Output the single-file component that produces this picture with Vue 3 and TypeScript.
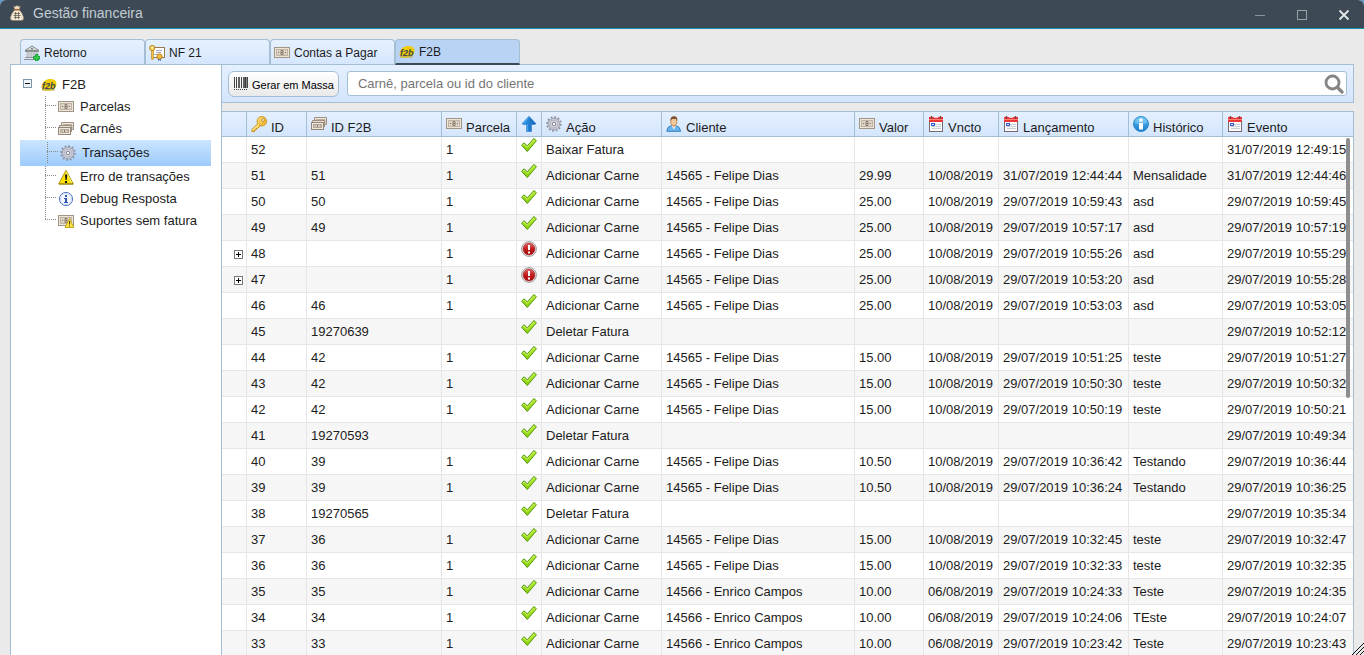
<script setup lang="ts">
import { ref } from 'vue'

interface Tab { label: string; icon: string }
interface TreeItem { label: string; icon: string }
interface Column { label: string; icon: string; cls: string }
interface Row {
  id: string; f2b: string; parcela: string; ok: boolean; acao: string; cliente: string
  valor: string; vncto: string; lancamento: string; historico: string; evento: string
}

const tabs: Tab[] = [
  { label: 'Retorno', icon: 'bank' },
  { label: 'NF 21', icon: 'certificate' },
  { label: 'Contas a Pagar', icon: 'note' },
  { label: 'F2B', icon: 'f2b' },
]
const activeTab = ref(3)

const tree: TreeItem[] = [
  { label: 'Parcelas', icon: 'note' },
  { label: 'Carnês', icon: 'notes' },
  { label: 'Transações', icon: 'gear' },
  { label: 'Erro de transações', icon: 'warning' },
  { label: 'Debug Resposta', icon: 'info' },
  { label: 'Suportes sem fatura', icon: 'note-warning' },
]
const selected = ref(2)
const open = ref(true)
const query = ref('')

const columns: Column[] = [
  { label: '', icon: '', cls: 'c-sub' },
  { label: 'ID', icon: 'key', cls: 'c-id' },
  { label: 'ID F2B', icon: 'notes', cls: 'c-f2b' },
  { label: 'Parcela', icon: 'note', cls: 'c-parcela' },
  { label: '', icon: 'arrow', cls: 'c-status' },
  { label: 'Ação', icon: 'gear', cls: 'c-acao' },
  { label: 'Cliente', icon: 'user', cls: 'c-cliente' },
  { label: 'Valor', icon: 'note', cls: 'c-valor' },
  { label: 'Vncto', icon: 'calendar', cls: 'c-vncto' },
  { label: 'Lançamento', icon: 'calendar', cls: 'c-lanc' },
  { label: 'Histórico', icon: 'info-blue', cls: 'c-hist' },
  { label: 'Evento', icon: 'calendar', cls: 'c-evento' },
]

const felipe = '14565 - Felipe Dias'
const enrico = '14566 - Enrico Campos'

function carne(id: string, f2b: string, cliente: string, valor: string, vncto: string, lanc: string, historico: string, evento: string, day = '29/07/2019', ok = true): Row {
  return { id, f2b, parcela: '1', ok, acao: 'Adicionar Carne', cliente, valor, vncto, lancamento: `${day} ${lanc}`, historico, evento: `${day} ${evento}` }
}
function fatura(id: string, f2b: string, parcela: string, acao: string, evento: string): Row {
  return { id, f2b, parcela, ok: true, acao, cliente: '', valor: '', vncto: '', lancamento: '', historico: '', evento }
}

const d10 = '10/08/2019'
const d06 = '06/08/2019'
const rows: Row[] = [
  fatura('52', '', '1', 'Baixar Fatura', '31/07/2019 12:49:15'),
  carne('51', '51', felipe, '29.99', d10, '12:44:44', 'Mensalidade', '12:44:46', '31/07/2019'),
  carne('50', '50', felipe, '25.00', d10, '10:59:43', 'asd', '10:59:45'),
  carne('49', '49', felipe, '25.00', d10, '10:57:17', 'asd', '10:57:19'),
  carne('48', '', felipe, '25.00', d10, '10:55:26', 'asd', '10:55:29', '29/07/2019', false),
  carne('47', '', felipe, '25.00', d10, '10:53:20', 'asd', '10:55:28', '29/07/2019', false),
  carne('46', '46', felipe, '25.00', d10, '10:53:03', 'asd', '10:53:05'),
  fatura('45', '19270639', '', 'Deletar Fatura', '29/07/2019 10:52:12'),
  carne('44', '42', felipe, '15.00', d10, '10:51:25', 'teste', '10:51:27'),
  carne('43', '42', felipe, '15.00', d10, '10:50:30', 'teste', '10:50:32'),
  carne('42', '42', felipe, '15.00', d10, '10:50:19', 'teste', '10:50:21'),
  fatura('41', '19270593', '', 'Deletar Fatura', '29/07/2019 10:49:34'),
  carne('40', '39', felipe, '10.50', d10, '10:36:42', 'Testando', '10:36:44'),
  carne('39', '39', felipe, '10.50', d10, '10:36:24', 'Testando', '10:36:25'),
  fatura('38', '19270565', '', 'Deletar Fatura', '29/07/2019 10:35:34'),
  carne('37', '36', felipe, '15.00', d10, '10:32:45', 'teste', '10:32:47'),
  carne('36', '36', felipe, '15.00', d10, '10:32:33', 'teste', '10:32:35'),
  carne('35', '35', enrico, '10.00', d06, '10:24:33', 'Teste', '10:24:35'),
  carne('34', '34', enrico, '10.00', d06, '10:24:06', 'TEste', '10:24:07'),
  carne('33', '33', enrico, '10.00', d06, '10:23:42', 'Teste', '10:23:43'),
]
</script>

<template>
  <div class="window">
    <svg class="sprite" width="0" height="0" aria-hidden="true">
      <defs>
        <linearGradient id="g-check" x1="0" y1="0" x2="0" y2="1"><stop offset="0" stop-color="#c0ee30" /><stop offset="1" stop-color="#86cc08" /></linearGradient>
        <linearGradient id="g-blue" x1="0" y1="0" x2="0" y2="1"><stop offset="0" stop-color="#6cc4f4" /><stop offset="1" stop-color="#1478c8" /></linearGradient>
        <linearGradient id="g-arrow" x1="0" y1="0" x2="1" y2="0"><stop offset="0" stop-color="#2f9cec" /><stop offset="1" stop-color="#1262b8" /></linearGradient>
        <linearGradient id="g-red" x1="0" y1="0" x2="0" y2="1"><stop offset="0" stop-color="#e06a68" /><stop offset=".5" stop-color="#c01c1c" /><stop offset="1" stop-color="#a80c0c" /></linearGradient>
        <linearGradient id="g-gold" x1="0" y1="0" x2="1" y2="1"><stop offset="0" stop-color="#ffe88a" /><stop offset="1" stop-color="#eda412" /></linearGradient>
      </defs>
      <symbol id="note" viewBox="0 0 16 16">
        <rect x=".5" y="2.500" width="15" height="10" fill="#ece5da" stroke="#a19587" />
        <rect x="2.500" y="4.500" width="11" height="6" fill="#ddd4c7" stroke="#bfb3a4" />
        <ellipse cx="8" cy="7.500" rx="2.300" ry="2.500" fill="#b3a798" />
        <path d="M7 5.500h2M7 9.500h2M4 7.500h1M11 7.500h1" stroke="#85786b" />
        <path d="M7.500 7.500h1" stroke="#5f544a" />
      </symbol>
      <symbol id="notes" viewBox="0 0 16 16">
        <path d="M3.500 8.500V1.500h12v7h-2" fill="#eee7dc" stroke="#a08f80" />
        <path d="M5 3.500h9v4" fill="none" stroke="#bcae9f" />
        <path d="M1.500 10V4.500h12V11" fill="#e6ded2" stroke="#a08f80" />
        <rect x=".5" y="6.500" width="12" height="7" fill="#ede6db" stroke="#93867a" />
        <rect x="2.500" y="8.500" width="8" height="3" fill="#d9d0c3" stroke="#b5a797" />
        <path d="M6.500 9v2" stroke="#7d7064" /><path d="M3.500 10h1M9 10h1" stroke="#978a7d" />
      </symbol>
      <symbol id="gear" viewBox="0 0 16 16">
        <circle cx="8" cy="8" r="6.900" fill="none" stroke="#8f919f" stroke-width="1.800" stroke-dasharray="1.800 1.813" />
        <circle cx="8" cy="8" r="5.800" fill="#c5c7d2" stroke="#a3a5b2" />
        <circle cx="8" cy="8" r="3.800" fill="#dcdde4" stroke="#b4b6c2" />
        <circle cx="8" cy="8" r="1.800" fill="#fff" stroke="#787b8c" />
      </symbol>
      <symbol id="warning" viewBox="0 0 16 16">
        <path d="M8 1.300 15.300 15H.7z" fill="#ffe100" stroke="#b29a12" stroke-linejoin="round" />
        <path d="M8 3 13.800 14" stroke="#fff27a" />
        <path d="M15.300 15H1" stroke="#8b7810" />
        <path d="M7 5.500h2.200L8.700 11H7.500z" fill="#111" /><rect x="7" y="12" width="2" height="2" fill="#111" />
      </symbol>
      <symbol id="info" viewBox="0 0 16 16">
        <circle cx="8" cy="8" r="6.600" fill="#f6f9ff" stroke="#5478c4" />
        <circle cx="8" cy="8" r="5.600" fill="none" stroke="#c8d7f5" />
        <rect x="7" y="4" width="2" height="2" fill="#2c54b4" />
        <path d="M6 7h3v5H7V8H6z" fill="#2c54b4" /><path d="M6 11.500h4" stroke="#2c54b4" />
      </symbol>
      <symbol id="info-blue" viewBox="0 0 16 16">
        <circle cx="8" cy="8" r="7.500" fill="url(#g-blue)" stroke="#2c88ca" />
        <path d="M2 7a6 6 0 0 1 12 0Q8 9 2 7z" fill="#8fd5fa" opacity=".5" />
        <circle cx="8" cy="4.300" r="1.800" fill="#fff" />
        <path d="M6 7h4v6.500H6z" fill="#fff" />
      </symbol>
      <symbol id="note-warning" viewBox="0 0 16 16">
        <use href="#note" />
        <path d="M11.500 5.500 15.800 14.500H7z" fill="#ffe340" stroke="#c6a91b" stroke-linejoin="round" />
        <path d="M11.500 8v3.500M11.500 12.500v1" stroke="#4a4010" />
      </symbol>
      <symbol id="f2b" viewBox="0 0 16 16">
        <path d="M.5 9.500Q1.500 3 8 2q7.500-.5 7.500 5-.5 6-8 7-7.500 0-7-4.500z" fill="#f2cc08" />
        <path d="M1 12.500h12.500" stroke="#c3b44c" stroke-width="2" />
      </symbol>
      <symbol id="key" viewBox="0 0 16 16">
        <path d="M7.500 7 1 13.500V15.500H3.500V14H5V12.500H6.500L9.500 9.500" fill="#ffd35a" stroke="#c98d18" stroke-linejoin="round" />
        <circle cx="10.800" cy="5.200" r="4.700" fill="url(#g-gold)" stroke="#cf951c" />
        <circle cx="12" cy="4" r="1.400" fill="#fff" stroke="#b87c12" stroke-width=".8" />
        <path d="M2 14 8 8" stroke="#fff0a8" />
      </symbol>
      <symbol id="arrow" viewBox="0 0 16 16">
        <path d="M8 .3 15 7.800 13.500 8.500H10.500V15.500H5.500V8.500H2.500L1 7.800z" fill="url(#g-arrow)" stroke="#1a6cbc" stroke-width=".5" stroke-linejoin="round" />
        <path d="M7.800 1.500 3 7.200M6.300 8v7" stroke="#58b4f6" fill="none" stroke-width=".8" />
      </symbol>
      <symbol id="user" viewBox="0 0 16 16">
        <path d="M.8 15.300Q1 10.500 5 9.700h5q4 .8 4.700 5.600z" fill="#68b4ee" stroke="#3880bc" />
        <path d="M5.500 9.500h4.500L7.800 13.500z" fill="#fff" />
        <path d="M5.800 9 7.800 12 9.800 9" fill="#eab482" />
        <ellipse cx="7.800" cy="5.500" rx="3" ry="4.200" fill="#f2c79c" stroke="#b67c4a" stroke-width=".8" />
        <path d="M4.500 5Q4 .5 8 .3q4 0 3.200 4.700L10 3H6z" fill="#80512e" />
      </symbol>
      <symbol id="calendar" viewBox="0 0 16 16">
        <rect x="1.500" y="3.500" width="13" height="12" fill="#fdfdfd" stroke="#766a72" />
        <path d="M1 1h14v5H1z" fill="#ea3636" /><path d="M1 3.500h14" stroke="#ff8078" />
        <path d="M3.500 0v3M12.500 0v3" stroke="#8b4038" stroke-width="1.500" /><path d="M6 1.500h4" stroke="#f6c8c4" />
        <path d="M4 8.500h9M4 10.500h9M4 12.500h9" stroke="#c0c6cc" />
        <path d="M6.500 7v7M9.500 7v7" stroke="#e4e7ea" />
        <rect x="3" y="7" width="4" height="3" fill="#3357cc" /><path d="M4 8.500h2" stroke="#dce6ff" />
      </symbol>
      <symbol id="check" viewBox="0 0 16 16">
        <path d="M.6 8.200 3 5.800l3.300 3L13 1.400 15.400 3.800 6.300 14.500z" fill="url(#g-check)" stroke="#4b9a12" stroke-linejoin="round" />
        <path d="M2 8 3 7 6.300 10.200 13 3" fill="none" stroke="#def884" stroke-width=".7" />
      </symbol>
      <symbol id="error" viewBox="0 0 16 16">
        <circle cx="8" cy="8" r="7.400" fill="#ececec" stroke="#9b9b9b" />
        <circle cx="8" cy="8" r="5.900" fill="url(#g-red)" stroke="#a61414" stroke-width=".6" />
        <path d="M7 4h2v5H7zM7 10.500h2v2H7z" fill="#fff" />
      </symbol>
      <symbol id="bank" viewBox="0 0 16 16">
        <path d="M8 .8 15 5.500H1z" fill="#d4d8d8" stroke="#898e8f" stroke-linejoin="round" />
        <path d="M1 6.500h14M1 12.500h14M0 14.500h15" stroke="#8e9293" />
        <path d="M3.500 7v5M6.500 7v5M9.500 7v5M12.500 7v5" stroke="#a0a5a6" stroke-width="2" />
        <path d="M3 7v5M6 7v5M9 7v5M12 7v5" stroke="#e2e4e4" />
        <circle cx="8" cy="3.800" r="1" fill="#7b8182" />
        <path d="M11.500 9.500h2.500V11.500h2V14h-2v2h-2.500v-2h-2V11.500h2z" fill="#2fcc4c" stroke="#129430" stroke-width=".8" />
      </symbol>
      <symbol id="certificate" viewBox="0 0 16 16">
        <rect x="3.500" y="2.500" width="12" height="10" fill="#fff" stroke="#9b7a50" />
        <path d="M7 5.500h6M7 7.500h5M5 9.500h4" stroke="#a8a6c4" />
        <path d="M2.500 5h2v9l-1 1-1-1z" fill="#f6c644" stroke="#b47c12" stroke-width=".6" />
        <circle cx="3.200" cy="3" r="2.600" fill="#ffd965" stroke="#bb8212" /><circle cx="3.200" cy="2.600" r=".8" fill="#fff" />
        <path d="M9 12v4l1.500-1 1.500 1v-4z" fill="#3c70d8" />
        <circle cx="10.500" cy="11.500" r="2.600" fill="#f6bd36" stroke="#bd821c" />
      </symbol>
      <symbol id="moneybag" viewBox="0 0 16 16">
        <path d="M5.500 5Q2.500 8 1.500 12 .8 15.500 4 15.500h8q3.200 0 2.500-3.500Q13.500 8 10.500 5z" fill="#efe5d2" stroke="#8c7759" stroke-width=".6" />
        <path d="M5.800 4.300 4.800 1.200 6.500 1.500 8 .5 9.500 1.500 11.200 1.200 10.200 4.300z" fill="#eadfc9" stroke="#a38c6a" stroke-width=".5" />
        <path d="M5.500 4.600h5" stroke="#b2602c" stroke-width="1.300" />
        <path d="M6.500 7v7M9.500 7v7M5 8.500h6M4.500 10.500h7M5 12.500h6" stroke="#6b6152" stroke-width=".8" />
      </symbol>
      <symbol id="barcode" viewBox="0 0 16 16">
        <path d="M1.500 1v11M3.500 1v11M8.500 1v11M14.500 1v11" stroke="#444" />
        <path d="M6 1v11M11 1v11M12.800 1v11" stroke="#222" stroke-width="1.400" />
        <path d="M1 13.500h14" stroke="#444" stroke-dasharray="1 1" />
      </symbol>
      <symbol id="search" viewBox="0 0 20 20">
        <circle cx="8.500" cy="8.500" r="6.500" fill="none" stroke="#858585" stroke-width="2.800" />
        <path d="M13.500 13.500 18 18" stroke="#858585" stroke-width="3.200" stroke-linecap="round" />
      </symbol>
    </svg>

    <header class="titlebar">
      <svg class="icon" aria-hidden="true"><use href="#moneybag" /></svg>
      <h1>Gestão financeira</h1>
      <div class="controls">
        <button type="button" aria-label="Minimizar"><svg width="12" height="12"><path d="M1 6.500h10" stroke="#8b949b" /></svg></button>
        <button type="button" aria-label="Maximizar"><svg width="12" height="12"><rect x="1.500" y="1.500" width="9" height="9" fill="none" stroke="#9aa2a8" /></svg></button>
        <button type="button" aria-label="Fechar"><svg width="12" height="12"><path d="M1.500 1.500l9 9M10.500 1.500l-9 9" stroke="#e4e8ea" stroke-width="1.800" /></svg></button>
      </div>
    </header>

    <nav class="tabs" role="tablist">
      <button v-for="(tab, i) in tabs" :key="tab.label" type="button" role="tab" class="tab" :class="{ active: activeTab === i }" :aria-selected="activeTab === i" @click="activeTab = i">
        <svg class="icon" aria-hidden="true"><use :href="`#${tab.icon}`" /><text v-if="tab.icon === 'f2b'" class="logo" x="1" y="12">f2b</text></svg>
        <span>{{ tab.label }}</span>
      </button>
    </nav>

    <div class="body">
      <aside class="sidebar">
        <div class="root">
          <button type="button" class="toggle" aria-label="Recolher F2B" :aria-expanded="open" @click="open = !open">
            <svg width="9" height="9"><rect x=".5" y=".5" width="8" height="8" fill="#eef3f8" stroke="#7f95aa" /><path d="M2 4.500h5" stroke="#111" /></svg>
          </button>
          <svg class="icon" aria-hidden="true"><use href="#f2b" /><text class="logo" x="1" y="12">f2b</text></svg>
          <span class="label">F2B</span>
        </div>
        <ul v-if="open">
          <li v-for="(item, i) in tree" :key="item.label">
            <a href="#" class="node" :class="{ selected: selected === i }" @click.prevent="selected = i">
              <span class="branch" :class="{ end: i === tree.length - 1 }"></span>
              <svg class="icon" aria-hidden="true"><use :href="`#${item.icon}`" /></svg>
              <span class="label">{{ item.label }}</span>
            </a>
          </li>
        </ul>
      </aside>

      <main class="content">
        <form class="toolbar" @submit.prevent>
          <button type="button" class="bulk">
            <svg class="icon" aria-hidden="true"><use href="#barcode" /></svg>
            <span>Gerar em Massa</span>
          </button>
          <div class="search">
            <input v-model="query" type="text" aria-label="Carnê, parcela ou id do cliente" placeholder="Carnê, parcela ou id do cliente">
            <button type="submit" aria-label="Pesquisar"><svg width="20" height="20"><use href="#search" /></svg></button>
          </div>
        </form>

        <div class="grid">
          <table>
            <colgroup><col v-for="c in columns" :key="c.cls" :class="c.cls"></colgroup>
            <thead>
              <tr>
                <th v-for="c in columns" :key="c.cls" scope="col">
                  <div class="head">
                    <svg v-if="c.icon" class="icon" aria-hidden="true"><use :href="`#${c.icon}`" /></svg>
                    <span>{{ c.label }}</span>
                  </div>
                </th>
              </tr>
            </thead>
            <tbody>
              <tr v-for="r in rows" :key="r.id">
                <td class="sub">
                  <button v-if="!r.ok" type="button" class="toggle" :aria-label="`Expandir ${r.id}`">
                    <svg width="9" height="9"><rect x=".5" y=".5" width="8" height="8" fill="#fff" stroke="#777" /><path d="M2 4.500h5M4.500 2v5" stroke="#000" /></svg>
                  </button>
                </td>
                <td>{{ r.id }}</td>
                <td>{{ r.f2b }}</td>
                <td>{{ r.parcela }}</td>
                <td class="status"><svg class="icon" role="img" :aria-label="r.ok ? 'OK' : 'Erro'"><use :href="r.ok ? '#check' : '#error'" /></svg></td>
                <td>{{ r.acao }}</td>
                <td>{{ r.cliente }}</td>
                <td>{{ r.valor }}</td>
                <td>{{ r.vncto }}</td>
                <td>{{ r.lancamento }}</td>
                <td>{{ r.historico }}</td>
                <td>{{ r.evento }}</td>
              </tr>
            </tbody>
          </table>
          <div class="thumb"></div>
        </div>
      </main>
    </div>
    <svg class="resizer" width="12" height="12" aria-hidden="true"><path d="M0 12 12 0M4 12l8-8M8 12l4-4" stroke="#111" /></svg>
  </div>
</template>

<style>
html, body { margin: 0; background: #5b9bd0; overflow: hidden; }
</style>

<style scoped>
* { box-sizing: border-box; }
.window {
  position: relative;
  display: flex;
  flex-direction: column;
  height: 100vh;
  overflow: hidden;
  background: #eaeaea;
  border-radius: 6px 6px 0 0;
  font: 13px/15px "Liberation Sans", Arial, sans-serif;
  color: #1c1c1c;
}
.sprite { position: absolute; }
.icon { display: block; flex: none; width: 16px; height: 16px; }
.logo { font-size: 9px; font-style: italic; font-weight: bold; fill: #3d4a4c; }
button { margin: 0; padding: 0; border: 0; background: none; font: inherit; color: inherit; cursor: pointer; }
button svg { display: block; }

.titlebar {
  display: flex;
  align-items: center;
  gap: 8px;
  flex: none;
  height: 29px;
  padding: 0 14px 3px 9px;
  background: #3d4a56;
  border-bottom: 1px solid #1593ac;
}
h1 { margin: 0; font-size: 14px; line-height: 16px; font-weight: normal; color: #c3ccd3; }
.controls { display: flex; gap: 30px; margin-left: auto; padding-top: 4px; }

.tabs { display: flex; flex: none; margin: 10px 10px 0; padding: 0 10px; }
.tab {
  display: flex;
  align-items: center;
  gap: 4px;
  width: 125px;
  height: 25px;
  padding: 2px 3px 0;
  border: 1px solid #a4bed4;
  border-bottom: 0;
  border-radius: 4px 4px 0 0;
  background: linear-gradient(#e6f1ff, #d5e6fd);
  font-size: 12px;
  line-height: 14px;
}
.tab.active {
  z-index: 1;
  height: 26px;
  margin-bottom: -1px;
  padding-top: 1px;
  background: #b9d3f5;
  border-bottom: 2px solid #3d4a56;
}

.body { display: flex; flex: 1; min-height: 0; margin: 0 10px; }
.sidebar {
  flex: none;
  width: 212px;
  padding: 9px 10px 0 9px;
  background: #fff;
  border: 1px solid #a4bed4;
  border-bottom: 0;
}
.root { display: flex; align-items: center; height: 22px; padding-left: 3px; }
.root .toggle { margin: 0 9px 4px 0; }
.root .icon { margin-right: 5px; }
.label { padding-bottom: 2px; }
ul { margin: 0; padding: 0; list-style: none; }
.node {
  display: flex;
  align-items: center;
  height: 22px;
  padding-left: 25px;
  color: inherit;
  text-decoration: none;
  white-space: nowrap;
}
.node .icon { margin-right: 6px; }
.node.selected { height: 26px; padding: 2px 2px 2px 27px; background: linear-gradient(#cce5ff, #9ccbfc); }
.branch {
  align-self: stretch;
  width: 13px;
  background:
    repeating-linear-gradient(#888 0 1px, transparent 1px 2px) 0 0 / 1px 100% no-repeat,
    repeating-linear-gradient(90deg, #888 0 1px, transparent 1px 2px) 0 9px / 11px 1px no-repeat;
}
.branch.end { background-size: 1px 10px, 11px 1px; }

.content { display: flex; flex-direction: column; flex: 1; min-width: 0; }
.toolbar {
  display: flex;
  gap: 8px;
  flex: none;
  height: 39px;
  padding: 6px;
  border: 1px solid #a4bed4;
  border-left: 0;
  background: linear-gradient(#e4f0ff, #d4e5fc);
}
.bulk {
  display: flex;
  align-items: center;
  gap: 3px;
  height: 26px;
  padding: 2px 4px 0;
  border: 1px solid #a4bed4;
  border-radius: 6px;
  background: linear-gradient(#fff, #e9e9e9);
  font-size: 11px;
  line-height: 13px;
  color: #000;
  white-space: nowrap;
}
.bulk .icon { margin-top: -2px; }
.search {
  display: flex;
  align-items: center;
  flex: 1;
  height: 25px;
  padding: 0 2px 0 10px;
  border: 1px solid #a4bed4;
  border-radius: 3px;
  background: #fff;
}
.search input { flex: 1; min-width: 0; padding: 0; border: 0; outline: 0; background: none; font: inherit; color: inherit; }
.search input::placeholder { color: #757575; opacity: 1; }

.grid {
  position: relative;
  flex: 1;
  min-height: 0;
  margin-top: 8px;
  overflow: hidden;
  border: 1px solid #a4bed4;
  border-width: 1px 1px 0 0;
  background: #fff;
}
table { width: 100%; table-layout: fixed; border-collapse: separate; border-spacing: 0; }
.c-sub, .c-status { width: 25px; }
.c-id { width: 60px; }
.c-f2b { width: 135px; }
.c-parcela, .c-vncto { width: 75px; }
.c-acao { width: 120px; }
.c-valor { width: 69px; }
.c-lanc, .c-evento { width: 130px; }
.c-hist { width: 94px; }
th {
  height: 25px;
  padding: 0 4px;
  border-right: 1px solid #a4bed4;
  border-bottom: 1px solid #a4bed4;
  background: linear-gradient(#e4f0ff, #d4e5fc);
  font-weight: normal;
  text-align: left;
}
.head { display: flex; align-items: flex-end; gap: 4px; height: 24px; padding: 4px 0 1px; }
.head .icon { align-self: flex-start; }
td {
  height: 26px;
  padding: 0 4px;
  border-right: 1px solid #e6e6e6;
  border-bottom: 1px solid #e6e6e6;
  white-space: nowrap;
  overflow: hidden;
}
th:last-child, td:last-child { border-right: 0; }
tbody tr:nth-child(even) { background: #f6f6f6; }
.status { vertical-align: top; }
.sub .toggle { display: block; margin: 1px 0 0 8px; }
.thumb { position: absolute; top: 26px; right: 3px; width: 4px; height: 260px; border-radius: 2px; background: #8e8e8e; }
.resizer { position: absolute; right: 0; bottom: 0; }
</style>
